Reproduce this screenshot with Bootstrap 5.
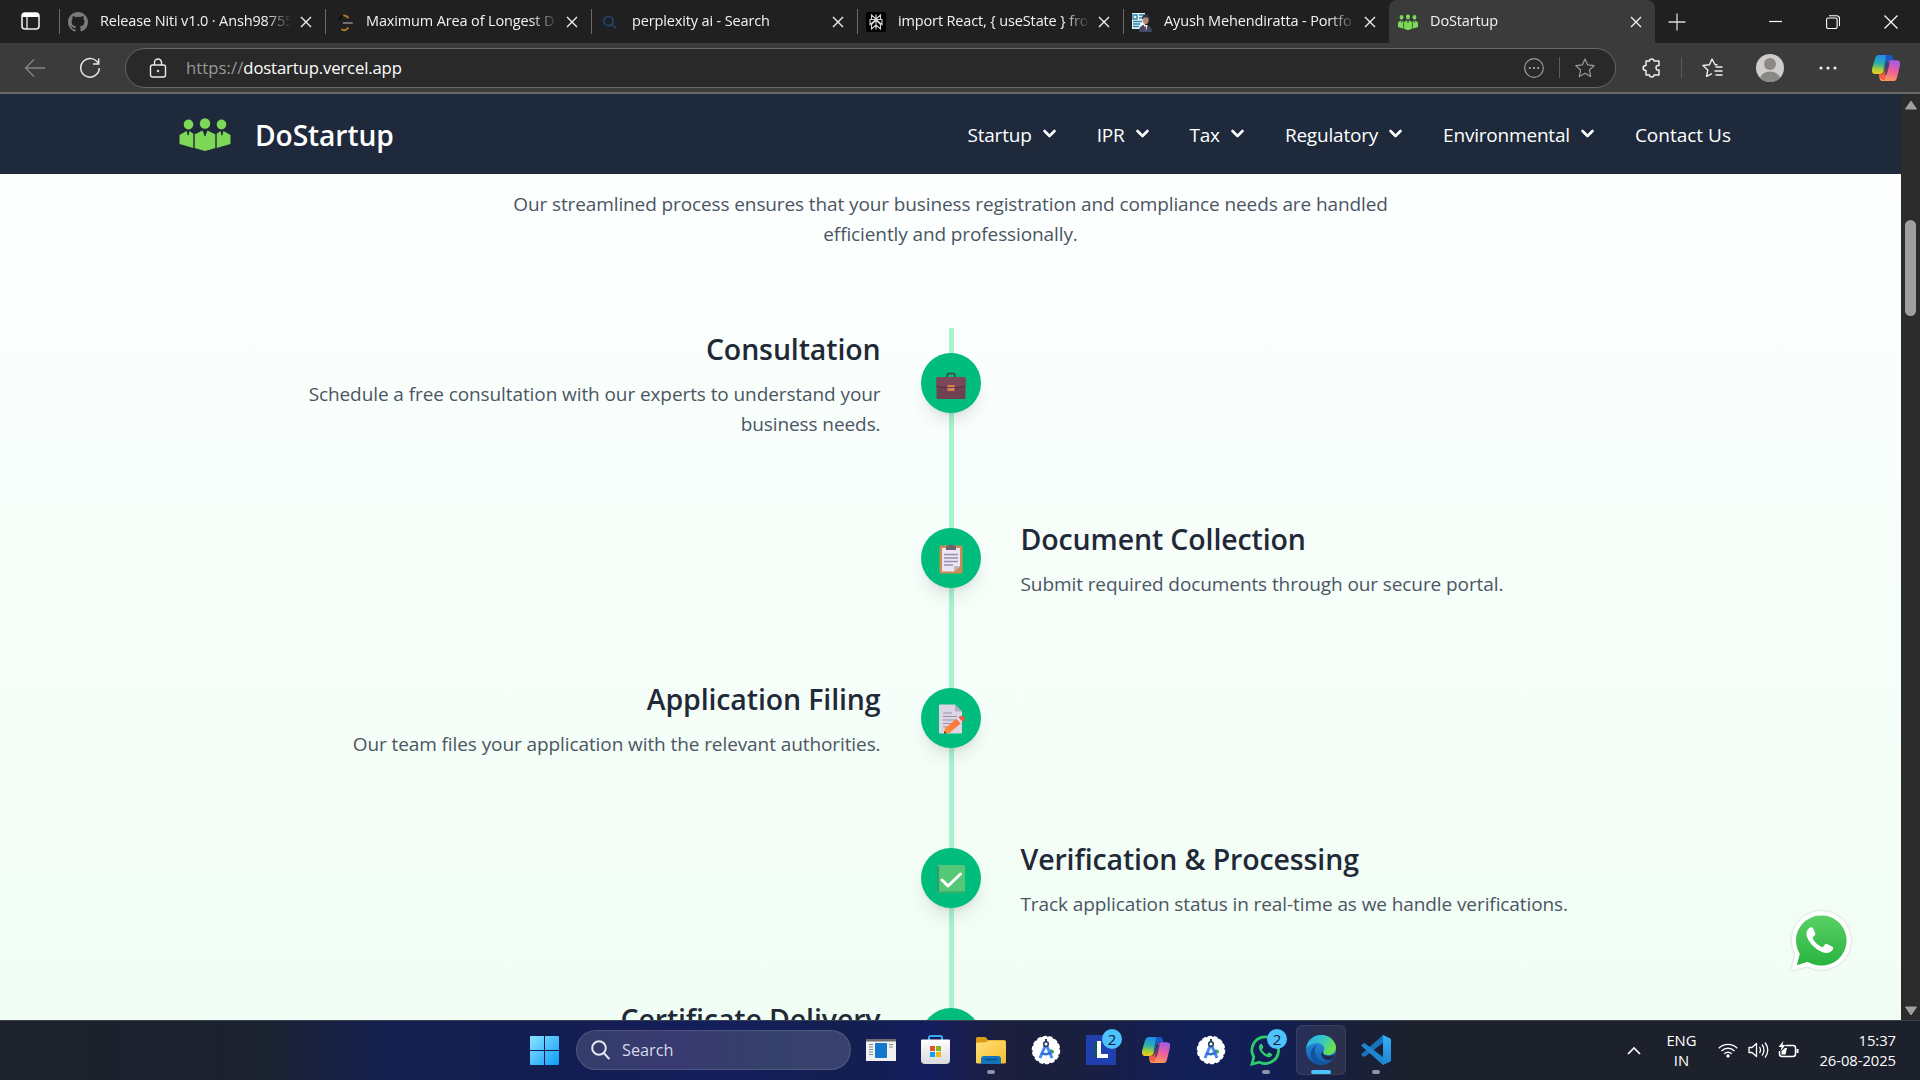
<!DOCTYPE html>
<html lang="en">
<head>
<meta charset="utf-8">
<meta name="viewport" content="width=device-width, initial-scale=1">
<title>DoStartup</title>
<link rel="stylesheet" href="https://cdn.jsdelivr.net/npm/bootstrap@5.3.0/dist/css/bootstrap.min.css">
<style>
body{width:1920px;height:1080px;overflow:hidden;font-family:"Open Sans","Noto Sans",sans-serif;background:#202020}
svg{display:block;flex:none}
.tabstrip{height:43px;background:#202020;color:#f2f2f2;font-size:14.5px;letter-spacing:-.14px}
.tabmenu{width:59px;padding-left:21px;padding-top:12px}
.tab{width:266px;height:43px;padding-left:9px;position:relative}
.tab::before{content:"";position:absolute;left:0;top:9px;height:25px;width:1px;background:#6a6a6a}
.tab .fav{width:20px;height:20px;margin-right:12px}
.tab .lbl{width:193px;overflow:hidden;white-space:nowrap;line-height:24px;margin-top:-1px;-webkit-mask-image:linear-gradient(90deg,#000 165px,rgba(0,0,0,.15) 188px,transparent 191px);mask-image:linear-gradient(90deg,#000 165px,rgba(0,0,0,.15) 188px,transparent 191px)}
.tab .shut{margin-left:7px;margin-top:1px}
.tab-on{background:#3b3b3b;border-radius:8px 8px 0 0}
.tab-on::before{display:none}
.toolbar{height:51px;background:#3b3b3b;border-bottom:2px solid #6b6a69}
.omni{width:1491px;height:40px;margin-left:24px;border:1px solid #666;border-radius:20px;background:#292929;font-size:16.7px;letter-spacing:-.14px;color:#fff;padding:0 20px 0 23px}
.omni .proto{color:#989898;letter-spacing:.05px}
.omni .addr{margin-left:19px;padding-top:1px}
.vline{width:1px;height:21px;background:#5c5c5c}
.viewport{height:926px}
.site{width:1901px;background:linear-gradient(180deg,#fff 0,#fcfffe 90px,#f0fdf4 950px);overflow:hidden}
.topnav{height:80px;background:#1e293b;color:#fff;padding:0 170px 0 179px}
.topnav .name{font-size:28.2px;font-weight:600;letter-spacing:-.1px;margin-left:24px;padding-top:2px}
.topnav .menu{font-size:19px;letter-spacing:-.2px;gap:40px;padding-top:2px}
.topnav .item{gap:10px}
.topnav .item svg{margin-top:-2px}
.topnav .plain{letter-spacing:0}
.intro{font-size:19px;line-height:30px;letter-spacing:-.11px;color:#4b5563;width:960px;margin:15px auto 79px;padding-right:0}
.steps{width:1340px;margin:0 auto;position:relative}
.steps::before{content:"";position:absolute;left:668px;top:0;width:5px;height:1000px;background:#a7f3d0}
.step{margin-bottom:80px;position:relative}
.step .side{flex:0 0 640px;padding:0 40px}
.step .side.text-end{padding-left:10px}
.step h3{font-size:28.5px;font-weight:600;line-height:42px;letter-spacing:-.12px;color:#1f2937;margin:0 0 9px}
.step p{font-size:19px;line-height:30px;letter-spacing:-.09px;color:#4b5563;margin:0 0 -1px;min-height:30px}
.dot{width:60px;height:60px;border-radius:50%;background:#00bc7d;box-shadow:0 12px 18px -4px rgba(0,0,0,.1),0 5px 7px -5px rgba(0,0,0,.1)}
.wa{position:absolute;left:1788px;top:909px;width:63px;height:65px;filter:drop-shadow(0 0 1px rgba(0,0,0,.2))}
.scroller{width:19px;background:#2c2c2c;padding:6px 0 4px}
.thumb{width:11px;height:96px;border-radius:6px;background:#9f9f9f;margin:110px auto auto}
.taskbar{height:60px;padding-bottom:1px;border-top:1px solid #3a4250;background:linear-gradient(90deg,#1d222b 0,#1b2230 260px,#15204f 380px,#141d52 560px,#141f5c 740px,#131f50 850px,#141d5e 930px,#1c1f3e 1000px,#191f3f 1080px,#131f58 1180px,#121f55 1270px,#191f3d 1340px,#1c212b 1420px,#1d212c 1920px);color:#fff}
.apps{margin-left:517px}
.app{width:55px;height:58px;position:relative}
.app.run::after{content:"";position:absolute;left:24px;bottom:5px;width:8px;height:4px;border-radius:2px;background:#8e92ab}
.app.live::before{content:"";position:absolute;left:3px;top:4px;width:50px;height:50px;border-radius:6px;background:rgba(255,255,255,.08);border:1px solid rgba(255,255,255,.08)}
.app.live::after{left:18px;width:20px;background:#4cc2ff}
.app svg{position:relative}
.count{position:absolute;left:29px;top:8px;width:20px;height:20px;border-radius:50%;background:#4cc2ff;color:#10202c;font-size:15px;line-height:20px;text-align:center}
.find{width:275px;height:40px;margin:0 2px 0 4px;border-radius:20px;border:1px solid rgba(255,255,255,.13);background:linear-gradient(90deg,#343d6b,#383a70 35%,#35416a 70%,#3a4270);font-size:16.3px;color:#d5d9ea;padding-left:14px;gap:12px}
.tray{margin-left:auto;font-size:14.8px;line-height:20px;letter-spacing:-.06px;padding-right:24px}
.tray .words{margin-top:-1px}
</style>
<script src="https://cdn.jsdelivr.net/npm/bootstrap@5.3.0/dist/js/bootstrap.bundle.min.js"></script>
</head>
<body>
<svg width="0" height="0" class="position-absolute">
  <defs>
    <linearGradient id="gWin" x1="0" y1="0" x2="1" y2="1"><stop offset="0" stop-color="#8ae4ff"/><stop offset="1" stop-color="#0f9bf7"/></linearGradient>
    <linearGradient id="gCopA" x1=".4" y1="0" x2=".3" y2="1"><stop offset="0" stop-color="#1f8cf0"/><stop offset=".45" stop-color="#2bb0a5"/><stop offset=".75" stop-color="#a5cf3a"/><stop offset="1" stop-color="#f3c81e"/></linearGradient>
    <linearGradient id="gCopB" x1=".7" y1="0" x2=".4" y2="1"><stop offset="0" stop-color="#a05be8"/><stop offset=".5" stop-color="#ee5f9c"/><stop offset="1" stop-color="#ff9a52"/></linearGradient>
    <linearGradient id="gWa" x1="0" y1="0" x2="0" y2="1"><stop offset="0" stop-color="#5bd066"/><stop offset="1" stop-color="#27b43e"/></linearGradient>
    <linearGradient id="gFold" x1="0" y1="0" x2="1" y2="1"><stop offset="0" stop-color="#ffe07a"/><stop offset="1" stop-color="#f7bd2a"/></linearGradient>
    <linearGradient id="gBag" x1="0" y1="0" x2="0" y2="1"><stop offset="0" stop-color="#fff"/><stop offset="1" stop-color="#d9d9dc"/></linearGradient>
    <linearGradient id="gEdA" x1="0" y1="0" x2="1" y2=".4"><stop offset="0" stop-color="#2ea9ea"/><stop offset=".55" stop-color="#35c6c9"/><stop offset="1" stop-color="#6be04f"/></linearGradient>
    <linearGradient id="gEdB" x1="0" y1="0" x2="0" y2="1"><stop offset="0" stop-color="#2b9be3"/><stop offset="1" stop-color="#0f5bb0"/></linearGradient>
    <linearGradient id="gVs" x1="0" y1="0" x2="0" y2="1"><stop offset="0" stop-color="#37b1f5"/><stop offset="1" stop-color="#1c86d8"/></linearGradient>
    <linearGradient id="gPen" x1="1" y1="0" x2="0" y2="1"><stop offset="0" stop-color="#ff6a3d"/><stop offset="1" stop-color="#ff9238"/></linearGradient>
    <symbol id="team" viewBox="0 0 51 33">
      <g fill="#7dd857">
        <ellipse cx="9" cy="6.500" rx="4.800" ry="5"/><ellipse cx="25.500" cy="5.500" rx="5.200" ry="5.300"/><ellipse cx="42" cy="6.500" rx="4.800" ry="5"/>
        <path d="M7 13 0 17v9l14 4V16l-4-3-1.500 5z"/><path d="m44 13 7 4v9l-14 4V16l4-3 1.500 5z"/>
        <path d="m23 12.500-8 4V30l10.500 3L36 30V16.500l-8-4-2.500 6z"/>
      </g>
      <path d="M14.500 17v13M36.500 17v13" stroke="#1e293b" stroke-width=".8"/>
      <path d="M25.500 13v5M9 13v4M42 13v4" stroke="#1e293b" stroke-width="1"/>
    </symbol>
    <symbol id="x" viewBox="0 0 12 12"><path d="m1 1 10 10M11 1 1 11" stroke="#f0f0f0" stroke-width="1.400" fill="none"/></symbol>
    <symbol id="chev" viewBox="0 0 14 10"><path d="m2 2 5 5 5-5" fill="none" stroke="#fff" stroke-width="2.600" stroke-linecap="round" stroke-linejoin="round"/></symbol>
    <symbol id="copilot" viewBox="0 0 28 26">
      <path d="M7 0h10c2 0 3 1 3.500 3l.5 2h-3c-2 0-3 1-3.700 3l-2.500 8c-.6 2-1.800 3-4 3H3c-2 0-3.500-2-3-5L3 3.500C3.700 1 5 0 7 0z" fill="url(#gCopA)"/>
      <path d="M21 26H11c-2 0-3-1-3.500-3L7 19h2c2 0 3-1 3.700-3l2.500-8c.6-2 1.800-3 4-3H25c2.500 0 3.500 2 3 5l-3 12.500c-.7 2.500-2 3.500-4 3.500z" fill="url(#gCopB)" transform="translate(0 .2)"/>
      <path d="M14 0h4c2 0 3 2 3.500 5H18c-2 0-3 1-3.600 3L11.800 16c-.6-3 .2-5 .8-7z" fill="#1a50c8" opacity=".85"/>
      <path d="M14.400 8 18 6.500 15 19c-.4 1-1.500 2-2.600 1.500z" fill="#2b3550" opacity=".75"/>
      <path d="M7 19h2c2 0 3-1 3.700-3l.5-1 .3 8c-.5 1.500-1 2-2 2-2 0-3-1-3.500-3z" fill="#f0503c" opacity=".75"/>
    </symbol>
    <symbol id="studio" viewBox="0 0 30 30">
      <circle cx="15" cy="15" r="13.500" fill="#fff" stroke="#fff" stroke-width="1.500" stroke-dasharray="4 2"/>
      <path d="M17 16c1-2 6-2.500 6 1 0 2-3 2-6 1z" fill="#3da35d"/>
      <path d="m15 9-6 14M15 9l6 14" stroke="#4a86f0" stroke-width="3"/><path d="M10 18q5 3 10-1" stroke="#2f6fe0" stroke-width="2.300" fill="none"/>
      <circle cx="15" cy="9" r="2.300" fill="#fff" stroke="#263b57" stroke-width="1.600"/><path d="M15 4v3" stroke="#263b57" stroke-width="2"/>
    </symbol>
    <symbol id="phone" viewBox="0 0 24 24"><path d="M5.500 2c-1 0-3.500 2.200-3.500 5C2 13 11 22 17 22c2.800 0 5-2.500 5-3.700 0-.8-.3-1-1-1.400l-3.500-1.800c-.8-.4-1.200-.2-1.700.4l-1.200 1.500c-.4.500-.9.500-1.500.2-2.500-1.200-5-3.600-6.300-6.200-.3-.6-.2-1 .2-1.400L8.300 8.200c.4-.5.500-.9.300-1.500L7 2.900C6.700 2.200 6.400 2 5.500 2z"/></symbol>
  </defs>
</svg>

<header class="tabstrip d-flex">
  <div class="tabmenu"><svg width="19" height="18" viewBox="0 0 19 18"><rect x="1" y="1" width="17" height="16" rx="3" fill="none" stroke="#eee" stroke-width="1.600"/><path d="M1.500 5V3.500Q1.500 1 4 1h11q2.500 0 2.500 2.500V5z" fill="#fff"/><path d="M6 5v12" stroke="#eee" stroke-width="1.300"/></svg></div>
  <div class="tab d-flex align-items-center">
    <svg class="fav" viewBox="0 0 16 16"><path fill="#7b7b7b" d="M8 0C3.580 0 0 3.580 0 8c0 3.540 2.290 6.530 5.470 7.590.4.070.55-.17.55-.38v-1.490c-2.010.37-2.530-.49-2.690-.94-.09-.23-.48-.94-.82-1.130-.28-.15-.68-.52-.01-.53.63-.01 1.080.58 1.230.82.72 1.210 1.870.87 2.330.66.070-.52.28-.87.51-1.070-1.780-.2-3.640-.89-3.640-3.950 0-.87.31-1.590.82-2.150-.08-.2-.36-1.020.08-2.120 0 0 .67-.21 2.200.82a7.500 7.500 0 0 1 4 0c1.530-1.040 2.200-.82 2.200-.82.44 1.100.16 1.920.08 2.120.51.56.82 1.270.82 2.150 0 3.070-1.870 3.750-3.650 3.950.29.25.54.73.54 1.480v2.200c0 .21.15.46.55.38A8 8 0 0 0 16 8c0-4.420-3.580-8-8-8z"/></svg>
    <div class="lbl">Release Niti v1.0 · Ansh98755</div><svg class="shut" width="12" height="12"><use href="#x"/></svg>
  </div>
  <div class="tab d-flex align-items-center">
    <svg class="fav" viewBox="0 0 20 20" fill="none" stroke-linecap="round" stroke-width="2"><path d="M10 3.500c2 0 3 1 4 2M14 16c-1.500 2-4 3-6 1.500" stroke="#a87426"/><path d="M9.500 11H18" stroke="#6f6f6f"/><path d="M8 4 5 8" stroke="#111"/></svg>
    <div class="lbl">Maximum Area of Longest D</div><svg class="shut" width="12" height="12"><use href="#x"/></svg>
  </div>
  <div class="tab d-flex align-items-center">
    <svg class="fav" viewBox="0 0 20 20" fill="none" stroke="#1d4568" stroke-width="1.800"><circle cx="8.500" cy="9" r="4.600"/><path d="m12 12.500 3.800 4"/></svg>
    <div class="lbl">perplexity ai - Search</div><svg class="shut" width="12" height="12"><use href="#x"/></svg>
  </div>
  <div class="tab d-flex align-items-center">
    <svg class="fav" viewBox="0 0 20 20"><rect width="20" height="20" rx="1.500" fill="#000"/><path d="M10 2.500v15M10 7 5.500 3v4.500M10 7l4.500-4v4.500M10 7.500l-6 5V7.500h12v5zM10 8l-4.500 4.500V17L10 13l4.500 4v-4.500z" fill="none" stroke="#d4d4d4" stroke-width="1.100"/></svg>
    <div class="lbl">import React, { useState } fro</div><svg class="shut" width="12" height="12"><use href="#x"/></svg>
  </div>
  <div class="tab d-flex align-items-center">
    <svg class="fav" viewBox="0 0 20 20"><path d="M0 1h13v16H0z" fill="#e8f3f8"/><path d="M1 3h4v4H1zM7 3h5M7 6h5M1 9.500h9M1 12h7M1 14.500h6" stroke="#2f86ad" stroke-width="1.400" fill="none"/><path d="M7 20c0-5 2-7 6-7s7 2 7 7z" fill="#3d4a63"/><path d="m12 13 2 6 1.500-6z" fill="#fff"/><path d="M13.500 14v5" stroke="#c63b3b"/><ellipse cx="13.700" cy="7.500" rx="3" ry="4.500" fill="#b98a72"/><path d="M10 7.500c-.8-7 8.500-7 7.500 0l-2-2h-4z" fill="#26344e"/></svg>
    <div class="lbl">Ayush Mehendiratta - Portfo</div><svg class="shut" width="12" height="12"><use href="#x"/></svg>
  </div>
  <div class="tab tab-on d-flex align-items-center">
    <svg class="fav" viewBox="0 0 51 44"><g transform="translate(0 2) scale(1 1.250)"><use href="#team" width="51" height="33"/></g></svg>
    <div class="lbl">DoStartup</div><svg class="shut" width="12" height="12"><use href="#x"/></svg>
  </div>
  <div class="d-flex flex-grow-1 align-items-center">
    <svg width="18" height="18" style="margin-left:13px" viewBox="0 0 18 18"><path d="M9 .5v17M.5 9h17" stroke="#d8d8d8" stroke-width="1.300"/></svg>
    <svg class="ms-auto" width="13" height="13"><path d="M0 6.500h13" stroke="#fff" stroke-width="1.200"/></svg>
    <svg width="14" height="14" style="margin-left:44px" fill="none" stroke="#fff" stroke-width="1.100"><rect x=".6" y="3" width="10.500" height="10.500" rx="1.500"/><path d="M3 .8h7.500q3 0 3 3V11"/></svg>
    <svg width="14" height="14" style="margin:0 22px 0 44px"><path d="m.5.5 13 13M13.500.5l-13 13" stroke="#fff" stroke-width="1.200"/></svg>
  </div>
</header>

<div class="toolbar d-flex align-items-center">
  <svg width="22" height="20" style="margin-left:24px" viewBox="0 0 22 20" fill="none" stroke="#858585" stroke-width="1.300"><path d="M10 1.500 1.500 10l8.500 8.500M1.500 10H21"/></svg>
  <svg width="22" height="22" style="margin-left:33px" viewBox="0 0 22 22" fill="none" stroke="#e6e6e6" stroke-width="1.500"><path d="M19.500 7A9.300 9.300 0 1 0 20.300 11M19.700 1.500V7H14"/></svg>
  <div class="omni d-flex align-items-center">
    <svg width="18" height="20" viewBox="0 0 18 20" fill="none" stroke="#ececec" stroke-width="1.400"><rect x="1.500" y="7" width="15" height="12" rx="2"/><path d="M5.500 7V4.500a3.500 3.500 0 0 1 7 0V7"/><circle cx="9" cy="13" r="1" fill="#ececec" stroke-width=".5"/></svg>
    <div class="addr"><span class="proto">https://</span>dostartup.vercel.app</div>
    <svg class="ms-auto" width="20" height="20" viewBox="0 0 20 20" fill="none" stroke="#9a9a9a" stroke-width="1.200"><circle cx="10" cy="10" r="9.300"/><path d="M4.800 10h2M9 10h2M13.200 10h2" stroke-width="2"/></svg>
    <div class="vline" style="margin:0 15px"></div>
    <svg width="20" height="20" viewBox="0 0 20 20" fill="none" stroke="#9a9a9a" stroke-width="1.200" stroke-linejoin="round"><path d="m10 1 2.700 5.900 6.500.7-4.800 4.400 1.300 6.500-5.700-3.300-5.700 3.300L5.600 12 .8 7.600l6.500-.7z"/></svg>
  </div>
  <svg width="20" height="20" style="margin-left:26px" viewBox="0 0 20 20" fill="none" stroke="#eee" stroke-width="1.500" stroke-linejoin="round"><path d="M4 3h3.500C7.500.3 12 .3 12 3h5v4.500c-4-1-4 5.500 0 4.500V17h-5c0 2.700-4.500 2.700-4.500 0H4v-4.500C.2 12.500.2 7.500 4 7.500z"/></svg>
  <div class="vline" style="margin:0 20px 0 19px"></div>
  <svg width="21" height="20" viewBox="0 0 21 20" fill="none" stroke="#eee" stroke-width="1.400" stroke-linejoin="round"><path d="M13 6.500 10 1 7.500 6.700l-6.500.8L5.800 12l-1.300 6.500L10 15.600M13.500 9h7M12.500 13h8M13.500 17h7M12.500 6.800h3"/></svg>
  <svg width="28" height="28" style="margin-left:33px" viewBox="0 0 28 28"><clipPath id="av"><circle cx="14" cy="14" r="14"/></clipPath><g clip-path="url(#av)"><path fill="#cfcdcb" d="M0 0h28v28H0z"/><circle cx="14" cy="10" r="6" fill="#8a8886"/><ellipse cx="14" cy="25" rx="10" ry="7.500" fill="#8a8886"/></g></svg>
  <svg width="18" height="4" style="margin-left:35px" fill="#eee"><circle cx="2" cy="2" r="1.600"/><circle cx="9" cy="2" r="1.600"/><circle cx="16" cy="2" r="1.600"/></svg>
  <svg width="28" height="26" style="margin-left:35px"><use href="#copilot"/></svg>
</div>

<div class="viewport d-flex">
  <main class="site">
    <nav class="topnav d-flex align-items-center">
      <svg width="52" height="33"><use href="#team"/></svg>
      <span class="name">DoStartup</span>
      <div class="menu d-flex ms-auto">
        <div class="item d-flex align-items-center">Startup <svg width="15" height="10"><use href="#chev"/></svg></div>
        <div class="item d-flex align-items-center">IPR <svg width="15" height="10"><use href="#chev"/></svg></div>
        <div class="item d-flex align-items-center">Tax <svg width="15" height="10"><use href="#chev"/></svg></div>
        <div class="item d-flex align-items-center">Regulatory <svg width="15" height="10"><use href="#chev"/></svg></div>
        <div class="item d-flex align-items-center">Environmental <svg width="15" height="10"><use href="#chev"/></svg></div>
        <div class="item plain d-flex align-items-center">Contact Us</div>
      </div>
    </nav>
    <p class="intro text-center">Our streamlined process ensures that your business registration and compliance needs are handled efficiently and professionally.</p>
    <section class="steps">
      <div class="step d-flex align-items-center">
        <div class="side text-end"><h3>Consultation</h3><p>Schedule a free consultation with our experts to understand your business needs.</p></div>
        <div class="dot d-flex align-items-center justify-content-center">
          <svg width="30" height="30" viewBox="0 0 30 30" style="margin-top:5px"><path d="M11 6V5q0-2.500 2.500-2.500h3Q19 2.500 19 5v1" fill="none" stroke="#4b3a42" stroke-width="1.500"/><rect x=".5" y="6" width="29" height="22" rx="1.500" fill="#6f4253"/><path d="M.5 7.500Q.5 6 2 6h26q1.500 0 1.500 1.500v8q-14.500 3-29 0z" fill="#7a485a"/><path d="M.5 15.500q14.500 3 29 0" fill="none" stroke="#54303f"/><path d="M11.500 14h7v6h-7z" fill="#d9824f"/><path d="M11.500 16.500h7" stroke="#6f4253" stroke-width="1"/></svg>
        </div>
        <div class="side"></div>
      </div>
      <div class="step d-flex align-items-center">
        <div class="side"></div>
        <div class="dot d-flex align-items-center justify-content-center">
          <svg width="24" height="30" viewBox="0 0 24 30" style="margin-top:2px"><rect x=".5" y="1.500" width="23" height="28" rx="1.500" fill="#cf8a55"/><path d="M3 4h18v18l-6 5.500H3z" fill="#ebe6f2"/><path d="M21 22h-6v5.500z" fill="#bdb3cc"/><path d="M7 6V3q0-1.500 2-1.500h1q2-2.500 4 0h1q2 0 2 1.500v3z" fill="#6b6470"/><path d="M5 10.500h14M5 14h14M5 17.500h14M5 21h9" stroke="#9b8fb0" stroke-width="1.300"/></svg>
        </div>
        <div class="side"><h3>Document Collection</h3><p>Submit required documents through our secure portal.</p></div>
      </div>
      <div class="step d-flex align-items-center">
        <div class="side text-end"><h3>Application Filing</h3><p>Our team files your application with the relevant authorities.</p></div>
        <div class="dot d-flex align-items-center justify-content-center">
          <svg width="26" height="30" viewBox="0 0 26 30" style="margin:2px 0 0 2px"><path d="M0 1.500Q0 .5 1 .5h15l7 7v22H1q-1 0-1-1z" fill="#dcd6e4"/><path d="M16 .5v6q0 1 1 1h6z" fill="#b4a9c2"/><path d="M4 9h9M4 12.500h14M4 16h14M4 19.500h9M4 23h5" stroke="#9b90ad" stroke-width="1.200"/><path d="m6 24 12-9.500 4 4.500L10.500 29 5 29.500z" fill="url(#gPen)"/><path d="m17.500 15 2-1.700 4 4.500-2 1.800z" fill="#e6d9e6"/><path d="m19.500 13.300 2-1.300q1.500-.8 2.500.4l1.500 1.800q.8 1.300-.3 2.300l-1.700 1.300z" fill="#f0583f"/><path d="m5 29.500.5-2.500 2 2.200z" fill="#222"/></svg>
        </div>
        <div class="side"></div>
      </div>
      <div class="step d-flex align-items-center">
        <div class="side"></div>
        <div class="dot d-flex align-items-center justify-content-center">
          <svg width="30" height="30" viewBox="0 0 30 30" style="margin-top:2px"><rect x="1" y="1" width="28" height="28" rx="1.500" fill="#55c877"/><path d="M2 28V2" stroke="#2f9d68" stroke-width="2"/><path d="M1 28h28" stroke="#38a768" stroke-width="1.500"/><path d="m6 16 6 6L24.500 10" fill="none" stroke="#fff" stroke-width="3" stroke-linecap="round" stroke-linejoin="round"/></svg>
        </div>
        <div class="side"><h3>Verification &amp; Processing</h3><p>Track application status in real-time as we handle verifications.</p></div>
      </div>
      <div class="step d-flex align-items-center">
        <div class="side text-end"><h3>Certificate Delivery</h3><p></p></div>
        <div class="dot"></div>
        <div class="side"></div>
      </div>
    </section>
  </main>
  <div class="scroller d-flex flex-column align-items-center">
    <svg width="14" height="10"><path d="M7 1 12.500 9h-11z" fill="#a0a0a0" stroke="#a0a0a0" stroke-linejoin="round"/></svg>
    <div class="thumb"></div>
    <svg width="14" height="10"><path d="M7 9 12.500 1h-11z" fill="#a0a0a0" stroke="#a0a0a0" stroke-linejoin="round"/></svg>
  </div>
</div>

<svg class="wa" viewBox="0 0 64 66"><path d="M3 62.500 7.500 46A30 29.800 0 1 1 20.500 58.500z" fill="#fff"/><path d="M9 57l3-11.500A25.700 25.500 0 1 1 20 53.500z" fill="url(#gWa)"/><g fill="#fff" transform="translate(16 16) scale(1.360 1.300)"><use href="#phone" width="24" height="24"/></g></svg>

<footer class="taskbar d-flex align-items-center">
  <div class="apps d-flex align-items-center">
    <div class="app d-flex align-items-center justify-content-center"><svg width="29" height="29" fill="url(#gWin)"><path d="M1 0h13v14H0V1q0-1 1-1zM15 0h13q1 0 1 1v13H15zM0 15h14v14H1q-1 0-1-1zM15 15h14v13q0 1-1 1H15z"/></svg></div>
    <div class="find d-flex align-items-center"><svg width="19" height="20" viewBox="0 0 19 20" fill="none" stroke="#e4e8ee" stroke-width="2"><circle cx="8" cy="8" r="6.800"/><path d="m12.800 13 5 5.500" stroke-linecap="round"/></svg>Search</div>
    <div class="app d-flex align-items-center justify-content-center"><svg width="30" height="22"><path d="M0 0h30v22H0z" fill="#f1f1f1"/><path d="M0 0h30v2.500H0z" fill="#6d6d6d"/><rect x="9" y="4" width="12" height="15" rx="1" fill="#1176cc"/><path d="M3 5.500h4M3 8h4M3 10.500h4M3 13h4M3 15.500h4M23 5.500h4M23 8h4" stroke="#888"/></svg></div>
    <div class="app d-flex align-items-center justify-content-center"><svg width="29" height="30"><path d="M8 5V2.500Q8 1 9.500 1h10Q21 1 21 2.500V5" stroke="#35a9ee" stroke-width="2" fill="none"/><path d="M0 5.500Q0 4.500 1 4.500h27q1 0 1 1V25q0 4-4 4H4q-4 0-4-4z" fill="url(#gBag)"/><path d="M9 11h5v5H9z" fill="#e8502a"/><path d="M15 11h5v5h-5z" fill="#80b81a"/><path d="M9 17h5v5H9z" fill="#14a0ea"/><path d="M15 17h5v5h-5z" fill="#f7b412"/></svg></div>
    <div class="app run d-flex align-items-center justify-content-center"><svg width="30" height="27"><path d="M0 1.500Q0 0 1.500 0H9q1 0 3 3h16q2 0 2 2v5H0z" fill="#dc9d14"/><path d="M0 7q0-1.500 1.500-1.500H9q1 0 3.500-2H28q2 0 2 2V25q0 1.500-1.500 1.500h-27Q0 26.500 0 25z" fill="url(#gFold)"/><path d="M5 27v-5q0-3 3-3h14q3 0 3 3v5z" fill="#1474bd"/><path d="M9 22.500h12" stroke="#0b4f8c" stroke-width="1.500"/></svg></div>
    <div class="app d-flex align-items-center justify-content-center"><svg width="30" height="30"><use href="#studio"/></svg></div>
    <div class="app d-flex align-items-center justify-content-center"><svg width="30" height="30"><path d="M0 0h30v30H0z" fill="#2140b0"/><path d="M8.500 8 11 6v17l-2.500-2z" fill="#0b5a4a"/><path d="M11 6h4v13h7v4H11z" fill="#fff"/></svg><span class="count">2</span></div>
    <div class="app d-flex align-items-center justify-content-center"><svg width="28" height="26"><use href="#copilot"/></svg></div>
    <div class="app d-flex align-items-center justify-content-center"><svg width="30" height="30"><use href="#studio"/></svg></div>
    <div class="app run d-flex align-items-center justify-content-center"><svg width="31" height="31" viewBox="0 0 31 31"><path d="m2 29 1.800-7A13.300 13.300 0 1 1 9.500 27.200z" fill="none" stroke="#2fcb6c" stroke-width="2.800"/><g fill="#2fcb6c" transform="translate(7.500 7.500) scale(.67)"><use href="#phone" width="24" height="24"/></g></svg><span class="count">2</span></div>
    <div class="app run live d-flex align-items-center justify-content-center"><svg width="30" height="30" viewBox="0 0 30 30"><circle cx="15" cy="15" r="15" fill="url(#gEdB)"/><path d="M0 14C1 5 8 0 15 0c9 0 15 6.500 15 12.500 0 5-4 7.500-8 7.500-3 0-5-1-5-2.200 0-1 1.200-1.500 1.200-4C18.200 10.500 15 8 11 8 6 8 1.500 10.500 0 14z" fill="url(#gEdA)"/><path d="M11 10c-4 4-2 12 3 15 4 2.500 9 2 13-1-3.500 5-10 7-15 5.500C5 27 3 19 6 14c1.500-2.500 3-3.500 5-4z" fill="#14549f"/><path d="M17 18c0 1.500 2 3 6 3 3 0 5-1 6.500-3-1 3-2 5-3.500 6.500-4 1.500-8 .5-10-2.500-1-2-.8-4 1-6z" fill="#232a52"/></svg></div>
    <div class="app run d-flex align-items-center justify-content-center"><svg width="30" height="30" viewBox="0 0 30 30"><path d="m22 0 7 3.200q1 .5 1 1.500v20.600q0 1-1 1.500L22 30z" fill="url(#gVs)"/><path d="M22 0v8L3.500 22 .8 20.600q-1-.9 0-1.800z" fill="#1a72b8"/><path d="M22 30v-8L3.500 8 .8 9.400q-1 .9 0 1.800z" fill="#1d86cf"/></svg></div>
  </div>
  <div class="tray d-flex align-items-center">
    <svg width="14" height="9" viewBox="0 0 14 9" fill="none" stroke="#fff" stroke-width="1.700"><path d="m1 8 6-6 6 6"/></svg>
    <div class="words text-center" style="width:30px;margin-left:25px">ENG<br>IN</div>
    <svg width="20" height="16" style="margin-left:22px" viewBox="0 0 20 16" fill="none" stroke="#fff" stroke-width="1.400"><path d="M.8 6.200a13 13 0 0 1 18.400 0M3.500 9a9.200 9.200 0 0 1 13 0M6.300 11.700a5.300 5.300 0 0 1 7.400 0"/><circle cx="10" cy="14" r="1.400" fill="#fff" stroke-width=".5"/></svg>
    <svg width="21" height="18" style="margin-left:10px" viewBox="0 0 21 18" fill="none" stroke="#fff" stroke-width="1.300" stroke-linejoin="round"><path d="M1 6.500v5h3l4.500 4V2.500L4 6.500zM11.500 6q2 3 0 6M14 3.500q4 5.500 0 11M17 1.500q5.500 7.500 0 15"/></svg>
    <svg width="21" height="18" style="margin-left:9px" viewBox="0 0 21 18" fill="none" stroke="#fff" stroke-width="1.500"><path d="M7.500 4.500H15q2.500 0 2.500 2.500v6q0 2.500-2.500 2.500H4Q1.500 15.500 1.500 13v-3"/><path d="M19.500 8v4" stroke-width="2"/><path d="M3.500 10v3.500h4L9 7H7z" fill="#fff" stroke="none"/><path d="M5.500 0 .5 6h3l-1 4 5-6h-3z" fill="#fff" stroke="none"/></svg>
    <div class="words text-end" style="margin-left:20px">15:37<br>26-08-2025</div>
  </div>
</footer>
</body>
</html>
